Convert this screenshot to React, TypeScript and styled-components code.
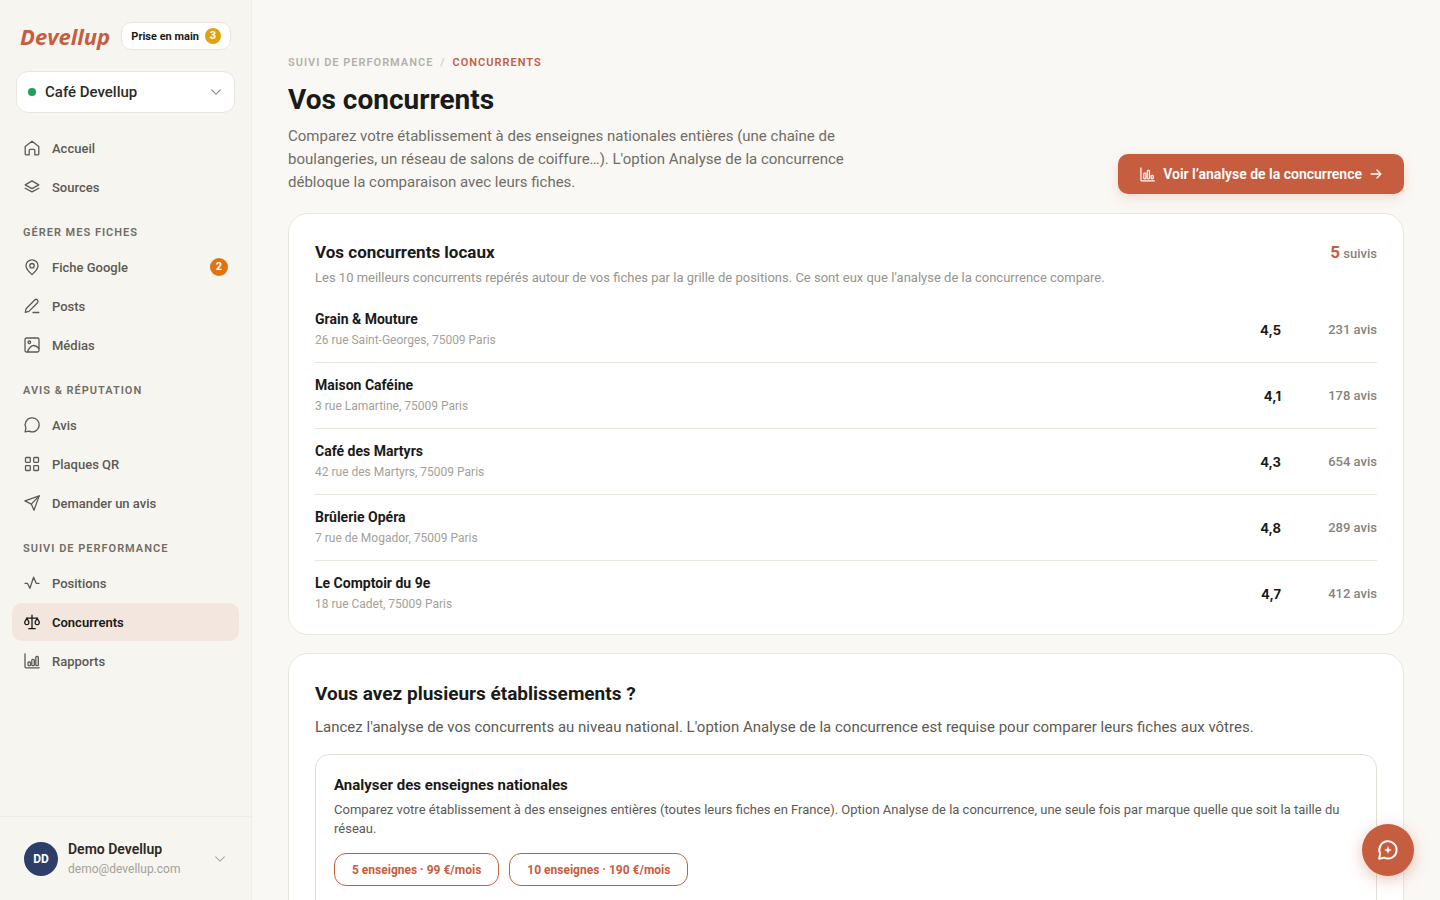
import React from "react";
import styled, { createGlobalStyle, css } from "styled-components";

const c = {
  accent: "#c65d3f",
  ink: "#1a1a18",
  text: "#5c5a54",
  muted: "#6f6d66",
  soft: "#a3a199",
  line: "#e9e6df",
  side: "#f7f5ef",
  page: "#faf8f4",
};

const GlobalStyle = createGlobalStyle`
  *, *::before, *::after { box-sizing: border-box; }
  body {
    margin: 0;
    background: ${c.page};
    color: ${c.ink};
    font-family: Roboto, "Liberation Sans", sans-serif;
    font-size: 15px;
  }
  button, select { font: inherit; color: inherit; }
  h1, h2, h3, p, ul { margin: 0; padding: 0; }
  ul { list-style: none; }
  a { color: inherit; text-decoration: none; }
`;

const Shell = styled.div`
  display: flex;
  height: 100vh;
`;

const Sidebar = styled.aside`
  flex: 0 0 252px;
  display: flex;
  flex-direction: column;
  background: ${c.side};
  border-right: 1px solid #efede6;
`;

const BrandRow = styled.div`
  display: flex;
  align-items: center;
  justify-content: space-between;
  padding: 22px 20px 0;
`;

const Brand = styled.a`
  color: ${c.accent};
  font-family: "Open Sans", Roboto, sans-serif;
  font-size: 22px;
  line-height: 28px;
  font-weight: 700;
  font-style: italic;
`;

const StartButton = styled.button`
  display: flex;
  align-items: center;
  gap: 6px;
  height: 28px;
  padding: 0 9px;
  border: 1px solid ${c.line};
  border-radius: 10px;
  background: #fff;
  font-size: 11px;
  font-weight: 700;
  white-space: nowrap;
`;

const Count = styled.span<{ $bg: string; $size: number }>`
  display: grid;
  place-items: center;
  width: ${(p) => p.$size}px;
  height: ${(p) => p.$size}px;
  border-radius: 50%;
  background: ${(p) => p.$bg};
  color: #fff;
  font-size: 11px;
  line-height: 16px;
  font-weight: 700;
`;

const Picker = styled.label`
  display: flex;
  align-items: center;
  gap: 9px;
  height: 42px;
  margin: 21px 16px 16px;
  padding: 0 12px 0 11px;
  border: 1px solid ${c.line};
  border-radius: 12px;
  background: #fff;
  color: #8f8d85;
`;

const Dot = styled.span`
  width: 8px;
  height: 8px;
  border-radius: 50%;
  background: #1f9d5b;
`;

const PickerSelect = styled.select`
  flex: 1;
  min-width: 0;
  padding: 0;
  border: 0;
  background: none;
  appearance: none;
  outline: none;
  color: #2b2a27;
  font-size: 15px;
  font-weight: 500;
`;

const Nav = styled.nav`
  flex: 1;
  padding: 0 12px;
  overflow: hidden;
`;

const NavTitle = styled.h2`
  padding: 19px 11px 7px;
  color: ${c.muted};
  font-size: 11px;
  line-height: 16px;
  font-weight: 600;
  letter-spacing: 1px;
  text-transform: uppercase;
`;

const NavList = styled.ul`
  display: flex;
  flex-direction: column;
  gap: 1px;
`;

const NavLink = styled.a<{ $active?: boolean }>`
  display: flex;
  align-items: center;
  gap: 12px;
  height: 38px;
  padding: 0 11px 0 12px;
  border-radius: 10px;
  color: ${c.text};
  font-size: 13px;
  font-weight: 500;
  ${(p) =>
    p.$active &&
    css`
      background: #f3e6df;
      color: ${c.ink};
      font-weight: 600;
    `}
`;

const NavLabel = styled.span`
  flex: 1;
`;

const Account = styled.button`
  display: flex;
  align-items: center;
  gap: 10px;
  height: 84px;
  padding: 0 25px 0 24px;
  border: 0;
  border-top: 1px solid #efede6;
  background: none;
  color: #aeaca4;
  text-align: left;
`;

const Avatar = styled.span`
  display: grid;
  place-items: center;
  width: 34px;
  height: 34px;
  border-radius: 50%;
  background: #2b3f68;
  color: #fff;
  font-size: 12px;
  font-weight: 700;
`;

const Identity = styled.span`
  flex: 1;
  display: flex;
  flex-direction: column;
  color: #2b2a27;
  font-size: 14px;
  line-height: 20px;
  font-weight: 600;
`;

const Email = styled.span`
  color: ${c.soft};
  font-size: 12px;
  font-weight: 400;
`;

const Main = styled.main`
  flex: 1;
  min-width: 0;
  overflow-y: auto;
  scrollbar-width: none;
  padding: 55px 36px 40px;
`;

const PageHeader = styled.header`
  display: flex;
  align-items: flex-end;
  justify-content: space-between;
  gap: 24px;
  margin-bottom: 19px;
`;

const Intro = styled.div`
  max-width: 580px;
`;

const Crumbs = styled.nav`
  display: flex;
  gap: 7px;
  color: #b3b1a8;
  font-size: 11px;
  line-height: 16px;
  font-weight: 600;
  letter-spacing: 1px;
  text-transform: uppercase;
`;

const CrumbSlash = styled.span`
  color: #d3d1c9;
`;

const CrumbCurrent = styled.span`
  color: ${c.accent};
`;

const Title = styled.h1`
  margin: 11px 0 7px;
  font-size: 28px;
  line-height: 36px;
  font-weight: 700;
`;

const Lead = styled.p`
  color: ${c.muted};
  font-size: 15px;
  line-height: 23px;
`;

const PrimaryButton = styled.button`
  display: flex;
  align-items: center;
  gap: 8px;
  height: 40px;
  padding: 0 22px;
  border: 0;
  border-radius: 10px;
  background: ${c.accent};
  color: #fff;
  font-size: 14px;
  font-weight: 600;
  white-space: nowrap;
  box-shadow: 0 4px 12px rgba(198, 93, 63, 0.18);
`;

const Card = styled.section`
  margin-bottom: 18px;
  padding: 26px;
  border: 1px solid ${c.line};
  border-radius: 20px;
  background: #fff;
`;

const CompetitorCard = styled(Card)`
  padding-bottom: 8px;
`;

const CardHead = styled.div`
  display: flex;
  justify-content: space-between;
  align-items: baseline;
`;

const CardTitle = styled.h2<{ $large?: boolean }>`
  font-size: ${(p) => (p.$large ? 19 : 17)}px;
  line-height: ${(p) => (p.$large ? 28 : 24)}px;
  font-weight: 700;
`;

const Tracked = styled.span`
  color: #85837b;
  font-size: 13px;
  font-weight: 500;
`;

const TrackedCount = styled.b`
  color: ${c.accent};
  font-size: 17px;
`;

const CardNote = styled.p`
  margin: 4px 0 9px;
  color: #96948c;
  font-size: 13px;
  line-height: 20px;
`;

const Competitors = styled.table`
  width: 100%;
  border-collapse: collapse;
`;

const Row = styled.tr`
  & + & {
    border-top: 1px solid ${c.line};
  }
`;

const NameCell = styled.th`
  padding: 12px 0 11px;
  text-align: left;
  font-size: 14px;
  line-height: 21px;
  font-weight: 700;
`;

const Address = styled.span`
  display: block;
  color: ${c.soft};
  font-size: 12px;
  font-weight: 400;
`;

const ScoreCell = styled.td`
  padding: 0;
  text-align: right;
  font-family: Inter, Roboto, sans-serif;
  font-size: 13px;
  font-weight: 700;
`;

const ReviewCell = styled.td`
  width: 96px;
  padding: 0;
  color: #85837b;
  text-align: right;
  font-size: 13px;
  font-weight: 500;
`;

const CardLead = styled.p`
  margin: 7px 0 15px;
  color: ${c.text};
  font-size: 15px;
  line-height: 24px;
`;

const Offer = styled.div`
  padding: 18px 18px 32px;
  border: 1px solid #e2dfd8;
  border-radius: 14px;
`;

const OfferTitle = styled.h3`
  font-size: 15px;
  line-height: 24px;
  font-weight: 700;
`;

const OfferText = styled.p`
  margin: 3px 0 15px;
  color: ${c.text};
  font-size: 13px;
  line-height: 19px;
`;

const Plans = styled.div`
  display: flex;
  flex-wrap: wrap;
  gap: 10px;
`;

const PlanButton = styled.button`
  height: 33px;
  padding: 0 17px;
  border: 1px solid ${c.accent};
  border-radius: 12px;
  background: #fff;
  color: ${c.accent};
  font-size: 12px;
  font-weight: 700;
`;

const ChatButton = styled.button`
  position: fixed;
  right: 26px;
  bottom: 24px;
  display: grid;
  place-items: center;
  width: 52px;
  height: 52px;
  padding: 0;
  border: 0;
  border-radius: 50%;
  background: ${c.accent};
  color: #fff;
  box-shadow: 0 4px 16px rgba(198, 93, 63, 0.35);
`;

const paths: Record<string, React.ReactNode> = {
  home: <path d="M1.200 6.600 8 1.200l6.800 5.400V13.800a1 1 0 0 1-1 1h-3V10.300a1 1 0 0 0-1-1h-3.600a1 1 0 0 0-1 1v4.500h-3a1 1 0 0 1-1-1z" />,
  layers: (
    <>
      <path d="M8 1.900 14.800 5.900 8 9.600 1.200 5.900z" />
      <path d="M1.200 9.200 8 12.900l6.800-3.700" />
    </>
  ),
  pin: (
    <>
      <path d="M14 6.800C14 10.500 8 15.600 8 15.600S2 10.500 2 6.800a6 6 0 0 1 12 0z" />
      <circle cx="8" cy="6.700" r="2.200" />
    </>
  ),
  pen: (
    <>
      <path d="M1.300 14.300l.8-3.600L10.700 2a1.900 1.900 0 0 1 2.800 2.700L4.900 13.400z" />
      <path d="M9 14.500h5.800" />
    </>
  ),
  image: (
    <>
      <rect x="1" y="1" width="14" height="14" rx="1.500" />
      <circle cx="5.300" cy="5.300" r="1.300" />
      <path d="M3.500 14.800c1.500-3.600 4-6.300 6.300-6.300 1.900 0 3.500 1.200 5 2.800" />
    </>
  ),
  chat: <path d="M1.100 14.900l.8-3.900A7 7 0 1 1 5 14.100z" />,
  grid: (
    <>
      <rect x="1.500" y="1.500" width="4.800" height="4.800" rx="0.800" />
      <rect x="9.700" y="1.500" width="4.800" height="4.800" rx="0.800" />
      <rect x="1.500" y="9.700" width="4.800" height="4.800" rx="0.800" />
      <rect x="9.700" y="9.700" width="4.800" height="4.800" rx="0.800" />
    </>
  ),
  send: (
    <>
      <path d="M15.200.9 10 15.200 7.300 9.100.9 5.900z" />
      <path d="M15.200.9 7.300 9.100" />
    </>
  ),
  pulse: <path d="M1 8.300h2.400l2.500 5L9.600 2.200l2.600 6.100H15" />,
  scales: (
    <>
      <path d="M8 1.200v13.500M4.800 14.700h6.400M2.600 4.200h10.800" />
      <path d="M2.800 4.200.8 7.900a2.100 2.100 0 1 0 4 0z" />
      <path d="M13.200 4.200l-2 3.700a2.100 2.100 0 1 0 4 0z" />
    </>
  ),
  chart: (
    <>
      <path d="M1 .8v13a1 1 0 0 0 1 1h13.200" />
      <rect x="4" y="9" width="2.500" height="3.700" rx="0.900" />
      <rect x="7.800" y="6.300" width="2.500" height="6.400" rx="0.900" />
      <rect x="11.800" y="3.500" width="2.500" height="9.200" rx="0.900" />
    </>
  ),
  bars: (
    <>
      <path d="M1 1v12.800a1 1 0 0 0 1 1h13.200" />
      <rect x="4" y="6.500" width="2.300" height="6.200" rx="0.900" />
      <rect x="7.800" y="3.500" width="2.300" height="9.200" rx="0.900" />
      <rect x="11.800" y="9" width="2.300" height="3.700" rx="0.900" />
    </>
  ),
  arrow: <path d="M1.500 8h13M9.300 2.800 14.500 8l-5.200 5.200" />,
  chevron: <path d="M2.200 5.200 8 10.800l5.800-5.600" />,
  assistant: (
    <>
      <path d="M.9 15.100l.8-4.300A6.900 6.900 0 1 1 4.900 14.100z" />
      <path d="M8 5.200 8.800 7.200 10.800 8 8.800 8.800 8 10.800 7.200 8.800 5.200 8 7.200 7.200z" fill="currentColor" strokeWidth="0.200" />
    </>
  ),
};

function Icon({ name, size = 16, stroke = 1.3 }: { name: string; size?: number; stroke?: number }) {
  return (
    <svg
      width={size}
      height={size}
      viewBox="0 0 16 16"
      overflow="visible"
      fill="none"
      stroke="currentColor"
      strokeWidth={stroke}
      strokeLinecap="round"
      strokeLinejoin="round"
      aria-hidden="true"
    >
      {paths[name]}
    </svg>
  );
}

type Item = { icon: string; label: string; badge?: number; active?: boolean };

const groups: { title?: string; items: Item[] }[] = [
  {
    items: [
      { icon: "home", label: "Accueil" },
      { icon: "layers", label: "Sources" },
    ],
  },
  {
    title: "Gérer mes fiches",
    items: [
      { icon: "pin", label: "Fiche Google", badge: 2 },
      { icon: "pen", label: "Posts" },
      { icon: "image", label: "Médias" },
    ],
  },
  {
    title: "Avis & réputation",
    items: [
      { icon: "chat", label: "Avis" },
      { icon: "grid", label: "Plaques QR" },
      { icon: "send", label: "Demander un avis" },
    ],
  },
  {
    title: "Suivi de performance",
    items: [
      { icon: "pulse", label: "Positions" },
      { icon: "scales", label: "Concurrents", active: true },
      { icon: "chart", label: "Rapports" },
    ],
  },
];

const competitors = [
  { name: "Grain & Mouture", address: "26 rue Saint-Georges, 75009 Paris", score: "4,5", reviews: 231 },
  { name: "Maison Caféine", address: "3 rue Lamartine, 75009 Paris", score: "4,1", reviews: 178 },
  { name: "Café des Martyrs", address: "42 rue des Martyrs, 75009 Paris", score: "4,3", reviews: 654 },
  { name: "Brûlerie Opéra", address: "7 rue de Mogador, 75009 Paris", score: "4,8", reviews: 289 },
  { name: "Le Comptoir du 9e", address: "18 rue Cadet, 75009 Paris", score: "4,7", reviews: 412 },
];

export default function App() {
  return (
    <>
      <GlobalStyle />
      <Shell>
        <Sidebar>
          <BrandRow>
            <Brand href="#">Devellup</Brand>
            <StartButton type="button">
              Prise en main
              <Count $bg="#dfa30c" $size={16}>3</Count>
            </StartButton>
          </BrandRow>
          <Picker>
            <Dot />
            <PickerSelect aria-label="Établissement" defaultValue="cafe">
              <option value="cafe">Café Devellup</option>
            </PickerSelect>
            <Icon name="chevron" size={12} stroke={1.6} />
          </Picker>
          <Nav>
            {groups.map((group, i) => (
              <React.Fragment key={i}>
                {group.title && <NavTitle>{group.title}</NavTitle>}
                <NavList>
                  {group.items.map((item) => (
                    <li key={item.label}>
                      <NavLink href="#" $active={item.active} aria-current={item.active ? "page" : undefined}>
                        <Icon name={item.icon} />
                        <NavLabel>{item.label}</NavLabel>
                        {item.badge && <Count $bg="#e2720f" $size={18}>{item.badge}</Count>}
                      </NavLink>
                    </li>
                  ))}
                </NavList>
              </React.Fragment>
            ))}
          </Nav>
          <Account type="button">
            <Avatar>DD</Avatar>
            <Identity>
              Demo Devellup
              <Email>demo@devellup.com</Email>
            </Identity>
            <Icon name="chevron" size={12} stroke={1.6} />
          </Account>
        </Sidebar>

        <Main>
          <PageHeader>
            <Intro>
              <Crumbs aria-label="Fil d’Ariane">
                <a href="#">Suivi de performance</a>
                <CrumbSlash>/</CrumbSlash>
                <CrumbCurrent>Concurrents</CrumbCurrent>
              </Crumbs>
              <Title>Vos concurrents</Title>
              <Lead>
                Comparez votre établissement à des enseignes nationales entières (une chaîne de boulangeries, un réseau
                de salons de coiffure…). L'option Analyse de la concurrence débloque la comparaison avec leurs fiches.
              </Lead>
            </Intro>
            <PrimaryButton type="button">
              <Icon name="bars" size={15} />
              Voir l’analyse de la concurrence
              <Icon name="arrow" size={12} stroke={1.8} />
            </PrimaryButton>
          </PageHeader>

          <CompetitorCard>
            <CardHead>
              <CardTitle>Vos concurrents locaux</CardTitle>
              <Tracked>
                <TrackedCount>5</TrackedCount> suivis
              </Tracked>
            </CardHead>
            <CardNote>
              Les 10 meilleurs concurrents repérés autour de vos fiches par la grille de positions. Ce sont eux que
              l’analyse de la concurrence compare.
            </CardNote>
            <Competitors>
              <tbody>
                {competitors.map((item) => (
                  <Row key={item.name}>
                    <NameCell scope="row">
                      {item.name}
                      <Address>{item.address}</Address>
                    </NameCell>
                    <ScoreCell>{item.score}</ScoreCell>
                    <ReviewCell>{item.reviews} avis</ReviewCell>
                  </Row>
                ))}
              </tbody>
            </Competitors>
          </CompetitorCard>

          <Card>
            <CardTitle $large>Vous avez plusieurs établissements ?</CardTitle>
            <CardLead>
              Lancez l'analyse de vos concurrents au niveau national. L'option Analyse de la concurrence est requise
              pour comparer leurs fiches aux vôtres.
            </CardLead>
            <Offer>
              <OfferTitle>Analyser des enseignes nationales</OfferTitle>
              <OfferText>
                Comparez votre établissement à des enseignes entières (toutes leurs fiches en France). Option Analyse de
                la concurrence, une seule fois par marque quelle que soit la taille du réseau.
              </OfferText>
              <Plans>
                <PlanButton type="button">5 enseignes · 99 €/mois</PlanButton>
                <PlanButton type="button">10 enseignes · 190 €/mois</PlanButton>
              </Plans>
            </Offer>
          </Card>
        </Main>
      </Shell>
      <ChatButton type="button" aria-label="Ouvrir l’assistant">
        <Icon name="assistant" size={20} stroke={1.6} />
      </ChatButton>
    </>
  );
}
